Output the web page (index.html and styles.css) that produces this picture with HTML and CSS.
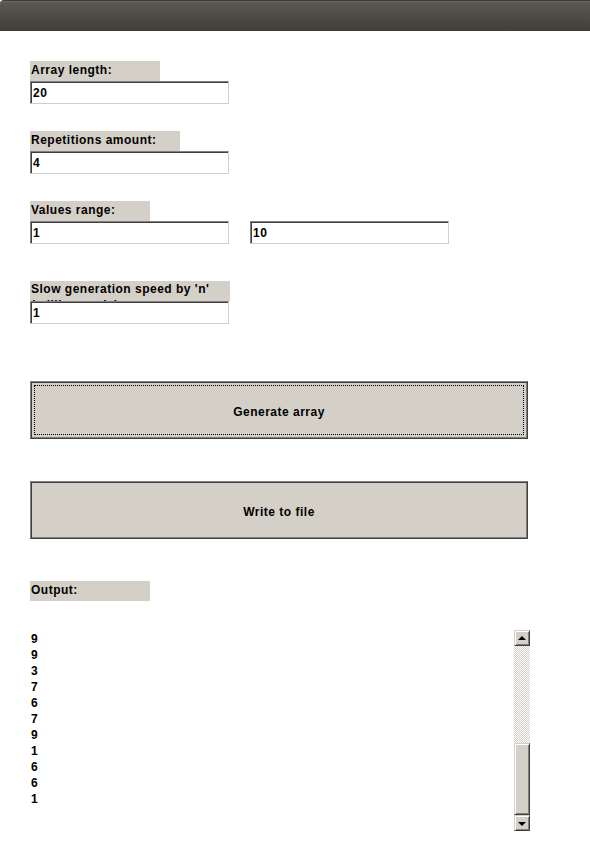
FILE: index.html
```html
<!DOCTYPE html>
<html>
<head>
<meta charset="utf-8">
<link rel="stylesheet" href="styles.css">
</head>
<body>
<div class="titlebar"></div>
<main class="form">
  <section class="field">
    <div class="label w130">Array length:</div>
    <input class="text" type="text" value="20">
  </section>
  <section class="field gap27">
    <div class="label w150">Repetitions amount:</div>
    <input class="text" type="text" value="4">
  </section>
  <section class="field gap27">
    <div class="label w120">Values range:</div>
    <div class="range">
      <input class="text" type="text" value="1">
      <input class="text" type="text" value="10">
    </div>
  </section>
  <section class="field gap37">
    <div class="label w200 multi">Slow generation speed by 'n' (milliseconds)</div>
    <input class="text" type="text" value="1">
  </section>
  <button class="btn focused gap57"><span>Generate array</span></button>
  <button class="btn gap42"><span>Write to file</span></button>
  <div class="label w120 gap42">Output:</div>
  <div class="output">
    <div class="lines">
      <div>9</div><div>9</div><div>3</div><div>7</div><div>6</div><div>7</div><div>9</div><div>1</div><div>6</div><div>6</div><div>1</div>
    </div>
    <div class="scrollbar">
      <div class="arrow up"><i></i></div>
      <div class="track"></div>
      <div class="thumb"></div>
      <div class="arrow down"><i></i></div>
    </div>
  </div>
</main>
</body>
</html>
```
FILE: styles.css
```css
* { box-sizing: border-box; }
html, body { margin: 0; padding: 0; background: #fff; }
body {
  font-family: "Liberation Sans", Arial, sans-serif;
  font-weight: bold;
  font-size: 12px;
  letter-spacing: 0.5px;
  color: #000;
}
.titlebar {
  height: 31px;
  background: linear-gradient(#5b5952, #3f3e39);
  border-top: 1px solid #3a3934;
  box-shadow: inset 0 1px 0 #6c6a62;
  border-radius: 4px 0 0 0;
}
.form {
  padding: 30px 0 0 30px;
  display: flex;
  flex-direction: column;
  align-items: flex-start;
}
.field { display: flex; flex-direction: column; align-items: flex-start; }
.gap27 { margin-top: 27px; }
.gap37 { margin-top: 37px; }
.gap42 { margin-top: 42px; }
.gap57 { margin-top: 57px; }
.label {
  height: 20px;
  background: #d4d0c8;
  padding: 1px 0 0 1px;
  line-height: 16px;
  overflow: hidden;
}
.label.multi { padding-top: 0; }
.w120 { width: 120px; }
.w130 { width: 130px; }
.w150 { width: 150px; }
.w200 { width: 200px; }
.text {
  width: 199px;
  height: 23px;
  margin: 0;
  padding: 1px 1px 0 2px;
  font: inherit;
  letter-spacing: inherit;
  color: #000;
  background: #fff;
  border-style: solid;
  border-width: 1px;
  border-color: #808080 #d4d0c8 #d4d0c8 #808080;
  box-shadow: inset 1px 1px 0 #404040;
  outline: none;
}
.range { display: flex; gap: 21px; }
.btn {
  width: 498px;
  height: 58px;
  margin-left: 0;
  padding: 0;
  font: inherit;
  letter-spacing: inherit;
  color: #000;
  background: #d4d0c8;
  border: 1px solid;
  border-color: #808080 #404040 #404040 #808080;
  box-shadow: inset 1px 1px 0 #404040, inset -1px -1px 0 #808080;
}
.btn span { position: relative; top: 2px; }
.btn.focused {
  outline: 1px dotted #000;
  outline-offset: -5px;
}
.output {
  margin-top: 29px;
  width: 500px;
  height: 201px;
  display: flex;
  line-height: 16px;
}
.lines { flex: 1; padding: 1px 0 0 1px; }
.scrollbar {
  width: 16px;
  display: flex;
  flex-direction: column;
}
.arrow {
  height: 16px;
  background: #d4d0c8;
  border-style: solid;
  border-width: 1px;
  border-color: #d4d0c8 #404040 #404040 #d4d0c8;
  box-shadow: inset 1px 1px 0 #fff, inset -1px -1px 0 #808080;
  display: flex;
  align-items: center;
  justify-content: center;
}
.arrow i {
  width: 0; height: 0;
  border-left: 4px solid transparent;
  border-right: 4px solid transparent;
}
.arrow.up i { border-bottom: 4px solid #000; margin-top: -1px; }
.arrow.down i { border-top: 4px solid #000; margin-top: 1px; }
.track {
  height: 97px;
  background-color: #fff;
  background-image: repeating-conic-gradient(#d4d0c8 0 25%, #fff 0 50%);
  background-size: 2px 2px;
}
.thumb {
  height: 72px;
  background: #d4d0c8;
  border-style: solid;
  border-width: 1px;
  border-color: #d4d0c8 #404040 #404040 #d4d0c8;
  box-shadow: inset 1px 1px 0 #fff, inset -1px -1px 0 #808080;
}
```
